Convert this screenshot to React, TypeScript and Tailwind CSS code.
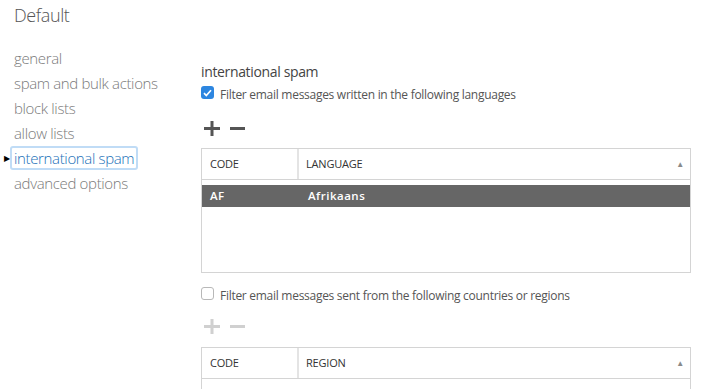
import type { ReactNode } from 'react'

const font = { fontFamily: '"Open Sans", "Noto Sans", sans-serif' }

const navItems = ['general', 'spam and bulk actions', 'block lists', 'allow lists', 'international spam', 'advanced options']

function PlusMinus({ disabled }: { disabled?: boolean }) {
  const color = disabled ? '#d0d0d0' : '#555555'
  return (
    <div className="flex h-[15px] items-center gap-[10px] pl-[3px]">
      <svg width="16" height="15" viewBox="0 0 16 15">
        <path d="M8 0v15M0 7.5h16" stroke={color} strokeWidth="3" />
      </svg>
      <svg width="15" height="15" viewBox="0 0 15 15">
        <path d="M0 7.5h15" stroke={color} strokeWidth="3" />
      </svg>
    </div>
  )
}

function Checkbox({ checked, children }: { checked?: boolean; children: ReactNode }) {
  return (
    <label className="flex h-[20px] items-start gap-[6px]">
      {checked ? (
        <span className="mt-[1px] flex h-[13px] w-[13px] items-center justify-center rounded-[3px] bg-[#2d86e0]">
          <svg width="9" height="8" viewBox="0 0 9 8">
            <path d="M1 4.2l2.3 2.3L8 1.2" stroke="white" strokeWidth="1.7" fill="none" />
          </svg>
        </span>
      ) : (
        <span className="mt-[1px] h-[13px] w-[13px] rounded-[3px] border border-[#b8b8b8] bg-white" />
      )}
      <span className="text-[12px] leading-[20px] tracking-[-0.28px] text-[#555]">{children}</span>
    </label>
  )
}

function TableHeader({ second }: { second: string }) {
  return (
    <div className="flex h-[31px] items-center border-b border-[#d4d4d4] text-[11px] tracking-[-0.2px] text-[#333]">
      <div className="flex h-full w-[97px] items-center border-r-2 border-[#e4e4e4] pl-[8px]">CODE</div>
      <div className="flex flex-1 items-center pl-[7px]">{second}</div>
      <span className="pr-[6px] text-[8px] text-[#8a8a8a]">▲</span>
    </div>
  )
}

export default function App() {
  return (
    <div className="flex h-[389px] w-[703px] overflow-hidden bg-white" style={font}>
      <aside className="w-[201px] shrink-0">
        <h1 className="pl-[14px] text-[18px] font-light leading-[30px] tracking-[-0.4px] text-[#555]">Default</h1>
        <ul className="mt-[16px]">
          {navItems.map((item) => {
            const selected = item === 'international spam'
            return (
              <li key={item} className="relative pl-[14px] text-[15px] font-light leading-[25px] tracking-[-0.35px]">
                {selected ? (
                  <>
                    <span className="absolute left-[4px] top-[8px] text-[8px] leading-[8px] text-black">▶</span>
                    <span className="relative text-[#1a6fb8]">
                      <span className="absolute -inset-x-[4px] -inset-y-[2px] rounded-[3px] border-2 border-[#c0dcf6]" />
                      {item}
                    </span>
                  </>
                ) : (
                  <span className="text-[#7a7a7a]">{item}</span>
                )}
              </li>
            )
          })}
        </ul>
      </aside>

      <main className="flex-1 pt-[62px]">
        <h2 className="text-[14px] leading-[20px] tracking-[-0.35px] text-[#444]">international spam</h2>
        <div className="mt-[3px]">
          <Checkbox checked>Filter email messages written in the following languages</Checkbox>
        </div>
        <div className="mt-[16px]">
          <PlusMinus />
        </div>
        <div className="mt-[12px] h-[125px] w-[490px] border border-[#d4d4d4]">
          <TableHeader second="LANGUAGE" />
          <div className="mt-[5px] flex h-[22px] items-center bg-[#666] text-[11.5px] font-semibold tracking-[0.5px] text-white">
            <div className="w-[97px] pl-[8px]">AF</div>
            <div className="pl-[9px]">Afrikaans</div>
          </div>
        </div>
        <div className="mt-[13px]">
          <Checkbox>Filter email messages sent from the following countries or regions</Checkbox>
        </div>
        <div className="mt-[13px]">
          <PlusMinus disabled />
        </div>
        <div className="mt-[13px] h-[125px] w-[490px] border border-[#d4d4d4]">
          <TableHeader second="REGION" />
        </div>
      </main>
    </div>
  )
}
